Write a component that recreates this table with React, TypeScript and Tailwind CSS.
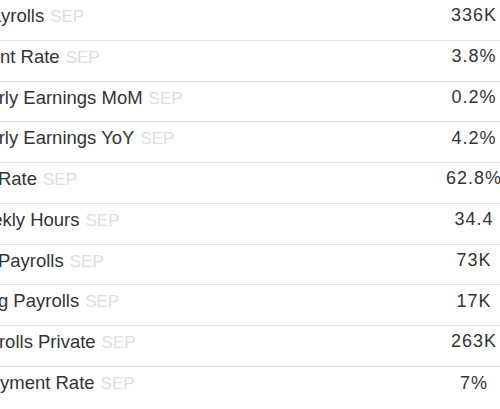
const rows = [
  { name: "Non Farm Payrolls", value: "336K" },
  { name: "Unemployment Rate", value: "3.8%" },
  { name: "Average Hourly Earnings MoM", value: "0.2%" },
  { name: "Average Hourly Earnings YoY", value: "4.2%" },
  { name: "Participation Rate", value: "62.8%" },
  { name: "Average Weekly Hours", value: "34.4" },
  { name: "Government Payrolls", value: "73K" },
  { name: "Manufacturing Payrolls", value: "17K" },
  { name: "Nonfarm Payrolls Private", value: "263K" },
  { name: "U-6 Unemployment Rate", value: "7%" },
];

export default function App() {
  return (
    <div className="h-[409px] w-[500px] overflow-hidden bg-white font-['Liberation_Sans',Arial,sans-serif]">
      <div className="-ml-[109px] w-[633px]">
        {rows.map((row, index) => (
          <div
            key={row.name}
            className={`flex h-[40.75px] items-center pb-2 ${index < rows.length - 1 ? "border-b border-[#e3e3e3]" : ""}`}
          >
            <div className="flex flex-1 items-baseline whitespace-nowrap">
              <span className="text-[18.5px] text-[#333333]">{row.name}</span>
              <span className="ml-[6px] text-[17px] text-[#dedede]">SEP</span>
            </div>
            <div className="w-[100px] text-center text-[18px] tracking-[1px] text-[#333333]">{row.value}</div>
          </div>
        ))}
      </div>
    </div>
  );
}
